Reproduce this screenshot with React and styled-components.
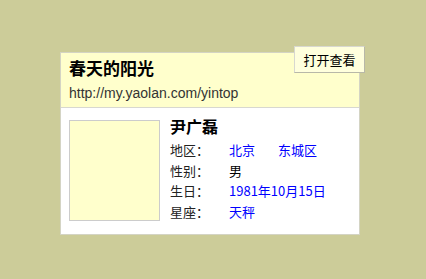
import styled, { createGlobalStyle } from 'styled-components';

const GlobalStyle = createGlobalStyle`
  html, body {
    margin: 0;
    padding: 0;
    background: #cccc99;
  }
  body {
    font-family: "Liberation Sans", "Noto Sans CJK SC", sans-serif;
    font-size: 13px;
  }
`;

const Page = styled.div`
  padding: 52px 0 0 60px;
  min-height: 279px;
  box-sizing: border-box;
`;

const Card = styled.div`
  position: relative;
  width: 300px;
  box-sizing: border-box;
  border: 1px solid #d4d4c4;
  background: #fff;
`;

const Header = styled.div`
  height: 55px;
  box-sizing: border-box;
  background: #ffffcc;
  border-bottom: 1px solid #d8d8d0;
  padding: 4px 8px 0;
`;

const Title = styled.div`
  font-family: "Noto Sans CJK SC", sans-serif;
  font-weight: 700;
  font-size: 17px;
  line-height: 22px;
  color: #000;
`;

const Url = styled.div`
  margin-top: 5px;
  font-family: "Liberation Sans", Arial, sans-serif;
  font-size: 14px;
  line-height: 18px;
  color: #333;
`;

const OpenButton = styled.div`
  position: absolute;
  top: -7px;
  right: -6px;
  width: 71px;
  height: 27px;
  box-sizing: border-box;
  display: flex;
  align-items: center;
  justify-content: center;
  background: #ffffdd;
  border: 1px solid #d8d8d0;
  border-right-color: #b8b8a8;
  border-bottom-color: #b8b8a8;
  font-family: "Noto Sans CJK SC", sans-serif;
  font-size: 13px;
  color: #000;
`;

const Body = styled.div`
  display: flex;
  gap: 10px;
  padding: 12px 8px 11px;
`;

const Photo = styled.div`
  width: 91px;
  height: 101px;
  box-sizing: border-box;
  border: 1px solid #cccccc;
  background: #ffffcc;
  flex: none;
`;

const Info = styled.div`
  display: flex;
  flex-direction: column;
  font-family: "Noto Sans CJK SC", sans-serif;
`;

const Name = styled.div`
  font-weight: 700;
  font-size: 16px;
  line-height: 20px;
  margin-top: -4px;
  margin-bottom: 4px;
  color: #000;
`;

const Row = styled.div`
  display: flex;
  font-size: 13px;
  line-height: 20.7px;
`;

const Label = styled.span`
  width: 59px;
  color: #222;
`;

const Value = styled.span`
  color: ${(p) => (p.$link ? '#0000ff' : '#000')};
  margin-right: ${(p) => p.$gap || 0}px;
`;

const rows = [
  { label: '地区：', values: [{ text: '北京', link: true, gap: 23 }, { text: '东城区', link: true }] },
  { label: '性别：', values: [{ text: '男' }] },
  { label: '生日：', values: [{ text: '1981年10月15日', link: true }] },
  { label: '星座：', values: [{ text: '天秤', link: true }] },
];

export default function App() {
  return (
    <>
      <GlobalStyle />
      <Page>
        <Card>
          <Header>
            <Title>春天的阳光</Title>
            <Url>http://my.yaolan.com/yintop</Url>
          </Header>
          <OpenButton>打开查看</OpenButton>
          <Body>
            <Photo />
            <Info>
              <Name>尹广磊</Name>
              {rows.map((r) => (
                <Row key={r.label}>
                  <Label>{r.label}</Label>
                  {r.values.map((v) => (
                    <Value key={v.text} $link={v.link} $gap={v.gap}>
                      {v.text}
                    </Value>
                  ))}
                </Row>
              ))}
            </Info>
          </Body>
        </Card>
      </Page>
    </>
  );
}
